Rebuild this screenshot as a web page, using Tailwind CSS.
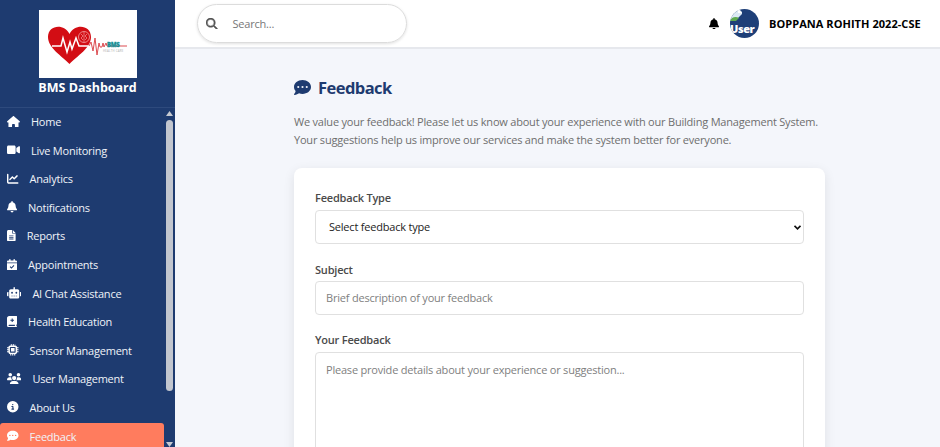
<!DOCTYPE html>
<html lang="en">
<head>
<meta charset="utf-8">
<title>BMS Dashboard</title>
<script src="https://cdn.jsdelivr.net/npm/@tailwindcss/browser@4"></script>
</head>
<body class="flex h-[447px] w-[940px] overflow-hidden bg-[#f4f6fb] font-['Open_Sans','Noto_Sans',sans-serif] text-[11px] tracking-[-0.205px]">
<aside class="flex w-[175px] shrink-0 flex-col bg-[#1e3b70] text-white">
  <div class="flex h-[108px] shrink-0 flex-col items-center border-b border-[#2e4a7d] pt-[10px]">
    <svg class="h-[68px] w-[98px] shrink-0 bg-white" viewBox="0 0 98 68">
      <path fill="#d30d14" d="M30.500 54C23 46 9 38 9 27c0-12 16-14 21.500-3C36 13 52 15 52 27c0 11-14 19-21.500 27z"/>
      <circle cx="45" cy="27" r="5.500" fill="#d30d14" stroke="#ee8588"/>
      <path fill="none" stroke="#ee8588" stroke-width=".8" d="M45 22v10M42 24l2 2-2 2 2 2M48 24l-2 2 2 2-2 2"/>
      <path fill="none" stroke="#fff" stroke-width="1.500" d="M13 36h9l2-8 4 14 3-10 2 7 4-11 3 8h11"/>
      <path fill="none" stroke="#dc4b50" stroke-width="1" d="M50 36l2-4 2 9 2-13 2 17 2-12 1 4h2l1-4 1 4 2-4 1 3h20"/>
      <text x="68" y="36.500" font-size="6" font-weight="800" textLength="12.500" fill="#178f95" stroke="#178f95" stroke-width=".3">BMS</text>
      <text x="64" y="42" font-size="2.800" textLength="20" fill="#aaa">HEALTH CARE</text>
    </svg>
    <h1 class="pt-px text-[12.500px] font-bold tracking-normal leading-[18px] whitespace-nowrap">BMS Dashboard</h1>
  </div>
  <div class="flex min-h-0 flex-1 justify-between overflow-hidden">
    <nav class="w-[164px] tracking-[-0.23px] text-[#f0f3f8] [&>a]:flex [&>a]:h-[28.6px] [&>a]:items-center [&>a]:gap-[11px] [&>a]:pl-[7px] [&>a]:whitespace-nowrap [&_svg]:mb-[2px] [&_svg]:h-[11.5px] [&_svg]:w-auto [&_svg]:fill-white">
      <a><svg viewBox="0 0 576 512"><path d="M575.8 255.5c0 18-15 32.1-32 32.1h-32l.7 160.2V472c0 22.1-17.9 40-40 40H392c-22.1 0-40-17.9-40-40v-88c0-17.7-14.3-32-32-32h-64c-17.7 0-32 14.3-32 32v88c0 22.1-17.9 40-40 40h-80c-22.1 0-40-17.9-40-40V287.6H32c-18 0-32-14-32-32.1 0-9 3-17 10-24L266.4 8c7-7 15-8 22-8s15 2 21 7l255.4 224.5c8 7 12 15 11 24z"/></svg><span>Home</span></a>
      <a><svg viewBox="0 0 576 512"><path d="M0 128c0-35.3 28.7-64 64-64h256c35.3 0 64 28.7 64 64v256c0 35.3-28.7 64-64 64H64c-35.3 0-64-28.7-64-64V128zm559.1-28.2c10.4 5.6 16.9 16.4 16.9 28.2v256c0 11.8-6.5 22.6-16.9 28.2s-23 5-32.9-1.6l-96-64-14.2-9.5V174.9l14.2-9.5 96-64c9.8-6.5 22.4-7.2 32.9-1.6z"/></svg><span>Live Monitoring</span></a>
      <a><svg viewBox="0 0 512 512"><path d="M64 64c0-17.7-14.3-32-32-32S0 46.3 0 64v336c0 44.2 35.8 80 80 80h400c17.7 0 32-14.3 32-32s-14.3-32-32-32H80c-8.8 0-16-7.2-16-16V64zm406.6 86.6c12.5-12.5 12.5-32.8 0-45.3s-32.8-12.5-45.3 0L320 210.7l-57.4-57.4c-12.5-12.5-32.8-12.5-45.3 0l-112 112c-12.5 12.5-12.5 32.8 0 45.3s32.8 12.5 45.3 0l89.4-89.3 57.4 57.4c12.5 12.5 32.8 12.5 45.3 0l128-128z"/></svg><span>Analytics</span></a>
      <a><svg viewBox="0 0 448 512"><path d="M224 0c-17.7 0-32 14.3-32 32v19.2C119 66 64 130.6 64 208v18.8c0 47-17.3 92.4-48.5 127.6l-7.4 8.3c-8.4 9.4-10.4 22.9-5.3 34.4S19.4 416 32 416h384c12.6 0 24-7.4 29.2-18.9s3.1-25-5.3-34.4l-7.4-8.3C401.3 319.2 384 273.9 384 226.8V208c0-77.4-55-142-128-156.8V32c0-17.7-14.3-32-32-32zm45.3 493.3c12-12 18.7-28.3 18.7-45.3H160c0 17 6.7 33.3 18.7 45.3S207 512 224 512s33.3-6.7 45.3-18.7z"/></svg><span>Notifications</span></a>
      <a><svg viewBox="0 0 384 512"><path fill-rule="evenodd" d="M64 0C28.700 0 0 28.700 0 64v384c0 35.300 28.700 64 64 64h256c35.300 0 64-28.700 64-64V160H256c-17.700 0-32-14.300-32-32V0H64zm192 0v128h128L256 0zM96 240h192v40H96v-40zm0 70h192v40H96v-40zm0 70h192v40H96v-40z"/></svg><span>Reports</span></a>
      <a><svg viewBox="0 0 448 512"><path fill-rule="evenodd" d="M96 32a32 32 0 0 1 64 0v32h128V32a32 32 0 0 1 64 0v32h48c26.500 0 48 21.500 48 48v48H0v-48c0-26.500 21.500-48 48-48h48V32zM0 192h448v272c0 26.500-21.500 48-48 48H48c-26.500 0-48-21.500-48-48V192zm329 113-34-34-95 95-47-47-34 34 81 81 129-129z"/></svg><span>Appointments</span></a>
      <a><svg viewBox="0 0 640 512"><path fill-rule="evenodd" d="M320 0c17.700 0 32 14.300 32 32v64h120c39.800 0 72 32.200 72 72v272c0 39.800-32.200 72-72 72H168c-39.800 0-72-32.200-72-72V168c0-39.800 32.200-72 72-72h120V32c0-17.700 14.300-32 32-32zM192 384v32h64v-32h-64zm96 0v32h64v-32h-64zm96 0v32h64v-32h-64zM264 256a40 40 0 1 0-80 0 40 40 0 0 0 80 0zm152 40a40 40 0 1 0 0-80 40 40 0 0 0 0 80zM48 224h16v192H48c-26.500 0-48-21.500-48-48v-96c0-26.500 21.500-48 48-48zm544 0c26.500 0 48 21.500 48 48v96c0 26.500-21.500 48-48 48h-16V224h16z"/></svg><span>AI Chat Assistance</span></a>
      <a><svg viewBox="0 0 448 512"><path fill-rule="evenodd" d="M96 0C43 0 0 43 0 96v320c0 53 43 96 96 96h320a32 32 0 0 0 0-64v-64c18 0 32-14 32-32V32c0-18-14-32-32-32H96zm0 384h256v64H96a32 32 0 0 1 0-64zM208 112h48v56h56v48h-56v56h-48v-56h-56v-48h56v-56z"/></svg><span>Health Education</span></a>
      <a><svg viewBox="0 0 512 512"><path fill-rule="evenodd" d="M152 0v64h40V0h40v64h48V0h40v64h40V0h8v64c44 0 80 36 80 80h64v40h-64v48h64v48h-64v48h64v40h-64c0 44-36 80-80 80v64h-48v-64h-40v64h-48v-64h-40v64h-48v-64c-44 0-80-36-80-80H0v-40h64v-48H0v-48h64v-48H0v-40h64c0-44 36-80 80-80V0h8zm8 128c-18 0-32 14-32 32v192c0 18 14 32 32 32h192c18 0 32-14 32-32V160c0-18-14-32-32-32H160zm16 48h160v160H176V176z"/></svg><span>Sensor Management</span></a>
      <a><svg viewBox="0 0 640 512"><path d="M144 0a80 80 0 1 1 0 160 80 80 0 0 1 0-160zm368 0a80 80 0 1 1 0 160 80 80 0 0 1 0-160zM0 298.700C0 239.800 47.800 192 106.700 192h42.700c15.900 0 31 3.500 44.600 9.700-1.300 7.200-1.900 14.700-1.900 22.300 0 38.200 16.800 72.500 43.300 96H21.300C9.600 320 0 310.400 0 298.700zM405.300 320c26.600-23.500 43.300-57.800 43.300-96 0-7.600-.7-15-1.900-22.300 13.600-6.300 28.700-9.700 44.600-9.700h42.700C592.200 192 640 239.800 640 298.700c0 11.800-9.600 21.300-21.300 21.300H405.300zM224 224a96 96 0 1 1 192 0 96 96 0 0 1-192 0zm-96 261.300C128 411.700 187.700 352 261.300 352h117.300C452.300 352 512 411.700 512 485.300c0 14.700-11.900 26.700-26.700 26.700H154.700c-14.700 0-26.700-11.900-26.700-26.700z"/></svg><span>User Management</span></a>
      <a><svg viewBox="0 0 512 512"><path fill-rule="evenodd" d="M256 512a256 256 0 1 0 0-512 256 256 0 0 0 0 512zm-40-176h24v-64h-24c-32 0-32-48 0-48h48c13 0 24 11 24 24v88h8c32 0 32 48 0 48h-80c-32 0-32-48 0-48zm40-208a32 32 0 1 1 0 64 32 32 0 0 1 0-64z"/></svg><span>About Us</span></a>
      <a class="rounded-t-[3px] bg-[#ff7c5e]"><svg viewBox="0 0 512 512"><path fill-rule="evenodd" d="M256 448c141.400 0 256-93.100 256-208S397.400 32 256 32 0 125.100 0 240c0 45.100 17.700 86.800 47.700 120.900-1.900 24.500-11.400 46.300-21.400 62.900-8 13-16 23-22 29-10 11-3 27.400 11.700 27.400 51 0 105-27 136-49.900 31.800 11.500 67 17.700 104 17.700zM128 208a32 32 0 1 1 0 64 32 32 0 0 1 0-64zm128 0a32 32 0 1 1 0 64 32 32 0 0 1 0-64zm128 0a32 32 0 1 1 0 64 32 32 0 0 1 0-64z"/></svg><span>Feedback</span></a>
    </nav>
    <div class="mr-[2px] flex w-[7px] flex-col items-center pt-[3px]">
      <svg class="h-[5px] w-[7px] fill-[#c6cad2]" viewBox="0 0 7 5"><path d="M3.500 0 7 5H0z"/></svg>
      <div class="mt-[4px] h-[271px] w-[6.500px] rounded-full bg-[#c2c6cf]"></div>
      <svg class="mt-auto mb-0 h-[5px] w-[7px] fill-[#c6cad2]" viewBox="0 0 7 5"><path d="M0 0h7L3.500 5z"/></svg>
    </div>
  </div>
</aside>
<div class="flex min-w-0 flex-1 flex-col">
  <header class="flex h-[49px] shrink-0 items-center justify-between border-b-2 border-[#e6e8ed] bg-white pr-[17px] pl-[22px]">
    <div class="flex h-[39px] w-[210px] items-center gap-[15px] rounded-full border border-[#dcdcdc] pl-[8px] shadow-[0_1px_3px_rgba(0,0,0,0.12)]">
      <svg class="h-[11.500px] w-[11.500px] fill-[#555]" viewBox="0 0 512 512"><path stroke="#555" stroke-width="18" d="M416 208c0 45.900-14.900 88.300-40 122.700l126.600 126.700c12.500 12.500 12.500 32.800 0 45.300s-32.800 12.500-45.300 0L330.700 376c-34.400 25.200-76.800 40-122.700 40C93.100 416 0 322.900 0 208S93.100 0 208 0s208 93.100 208 208zM208 352a144 144 0 1 0 0-288 144 144 0 1 0 0 288z"/></svg>
      <span class="pt-[2px] text-[#777]">Search...</span>
    </div>
    <div class="flex items-center">
      <svg class="mr-[11px] h-[11.500px] w-[10px]" viewBox="0 0 448 512"><path d="M224 0c-17.700 0-32 14.300-32 32v19.200C119 66 64 130.600 64 208v18.800c0 47-17.300 92.400-48.500 127.600l-7.400 8.300c-8.400 9.400-10.400 22.900-5.300 34.400S19.400 416 32 416h384c12.600 0 24-7.400 29.200-18.900s3.100-25-5.300-34.400l-7.400-8.300C401.300 319.200 384 273.900 384 226.800V208c0-77.400-55-142-128-156.800V32c0-17.700-14.300-32-32-32zm45.300 493.300c12-12 18.700-28.300 18.700-45.300H160c0 17 6.700 33.300 18.700 45.300S207 512 224 512s33.300-6.700 45.300-18.700z"/></svg>
      <div class="relative mr-[10px] h-[29px] w-[29px] overflow-hidden rounded-full bg-[#1e3f78]">
        <svg class="absolute top-0 left-0 h-[13px] w-[13px]" viewBox="0 0 13 13"><path fill="#dce9f4" d="M0 0h9l3 3v2L7 10l-7 2z"/><path fill="#5eaa50" d="M0 12c1-4 6-5 9-3l-3 3z"/><path fill="#fff" d="M8 0v4h4z"/></svg>
        <span class="absolute top-[13px] left-0 text-[11px] leading-[14px] font-extrabold tracking-[-0.4px] text-white">User</span>
      </div>
      <span class="w-[154px] pt-[2px] text-[11px] font-bold tracking-[0.05px] whitespace-nowrap text-black">BOPPANA ROHITH 2022-CSE</span>
    </div>
  </header>
  <main class="flex w-[531px] flex-1 flex-col self-start ml-[119px] pt-[28px]">
    <h2 class="flex h-[22px] items-center gap-[7px] text-[16.500px] font-bold tracking-[-0.55px] text-[#1e3b70]">
      <svg class="mb-[2px] h-[17px] w-[17px] fill-current" viewBox="0 0 512 512"><path fill-rule="evenodd" d="M256 448c141.400 0 256-93.100 256-208S397.400 32 256 32 0 125.100 0 240c0 45.100 17.700 86.800 47.700 120.900-1.900 24.500-11.400 46.300-21.400 62.900-8 13-16 23-22 29-10 11-3 27.400 11.700 27.400 51 0 105-27 136-49.900 31.800 11.500 67 17.700 104 17.700zM128 208a32 32 0 1 1 0 64 32 32 0 0 1 0-64zm128 0a32 32 0 1 1 0 64 32 32 0 0 1 0-64zm128 0a32 32 0 1 1 0 64 32 32 0 0 1 0-64z"/></svg>
      <span>Feedback</span>
    </h2>
    <p class="mt-[14px] h-[55px] leading-[18px] whitespace-nowrap text-[#6e6e6e]">We value your feedback! Please let us know about your experience with our Building Management System.<br>Your suggestions help us improve our services and make the system better for everyone.</p>
    <form class="flex h-[300px] shrink-0 flex-col rounded-t-[8px] bg-white px-[21px] pt-[21px] shadow-[0_3px_12px_rgba(0,0,0,0.09)]">
      <label class="h-[21px] shrink-0 leading-[18px] font-semibold text-[#4a4a4a]">Feedback Type</label>
      <div class="flex h-[34px] shrink-0 items-center justify-between rounded-[4px] border border-[#e0e0e0] pr-[2px] pl-[13px] text-[#1c1c1c]"><span class="pt-px">Select feedback type</span>
        <svg class="h-[5px] w-[7px]" viewBox="0 0 7 5" fill="none" stroke="#111" stroke-width="1.700"><path d="M.5.8 3.500 3.800 6.500.8"/></svg></div>
      <label class="mt-[17px] h-[20px] shrink-0 leading-[18px] font-semibold text-[#4a4a4a]">Subject</label>
      <div class="flex h-[34px] shrink-0 items-center rounded-[4px] border border-[#e0e0e0] pt-px pl-[10px] text-[#808080]">Brief description of your feedback</div>
      <label class="mt-[16px] h-[21px] shrink-0 leading-[18px] font-semibold text-[#4a4a4a]">Your Feedback</label>
      <div class="h-[120px] shrink-0 rounded-[4px] border border-[#e0e0e0] pt-[8px] pl-[10px] leading-[18px] text-[#808080]">Please provide details about your experience or suggestion...</div>
    </form>
  </main>
</div>
</body>
</html>
